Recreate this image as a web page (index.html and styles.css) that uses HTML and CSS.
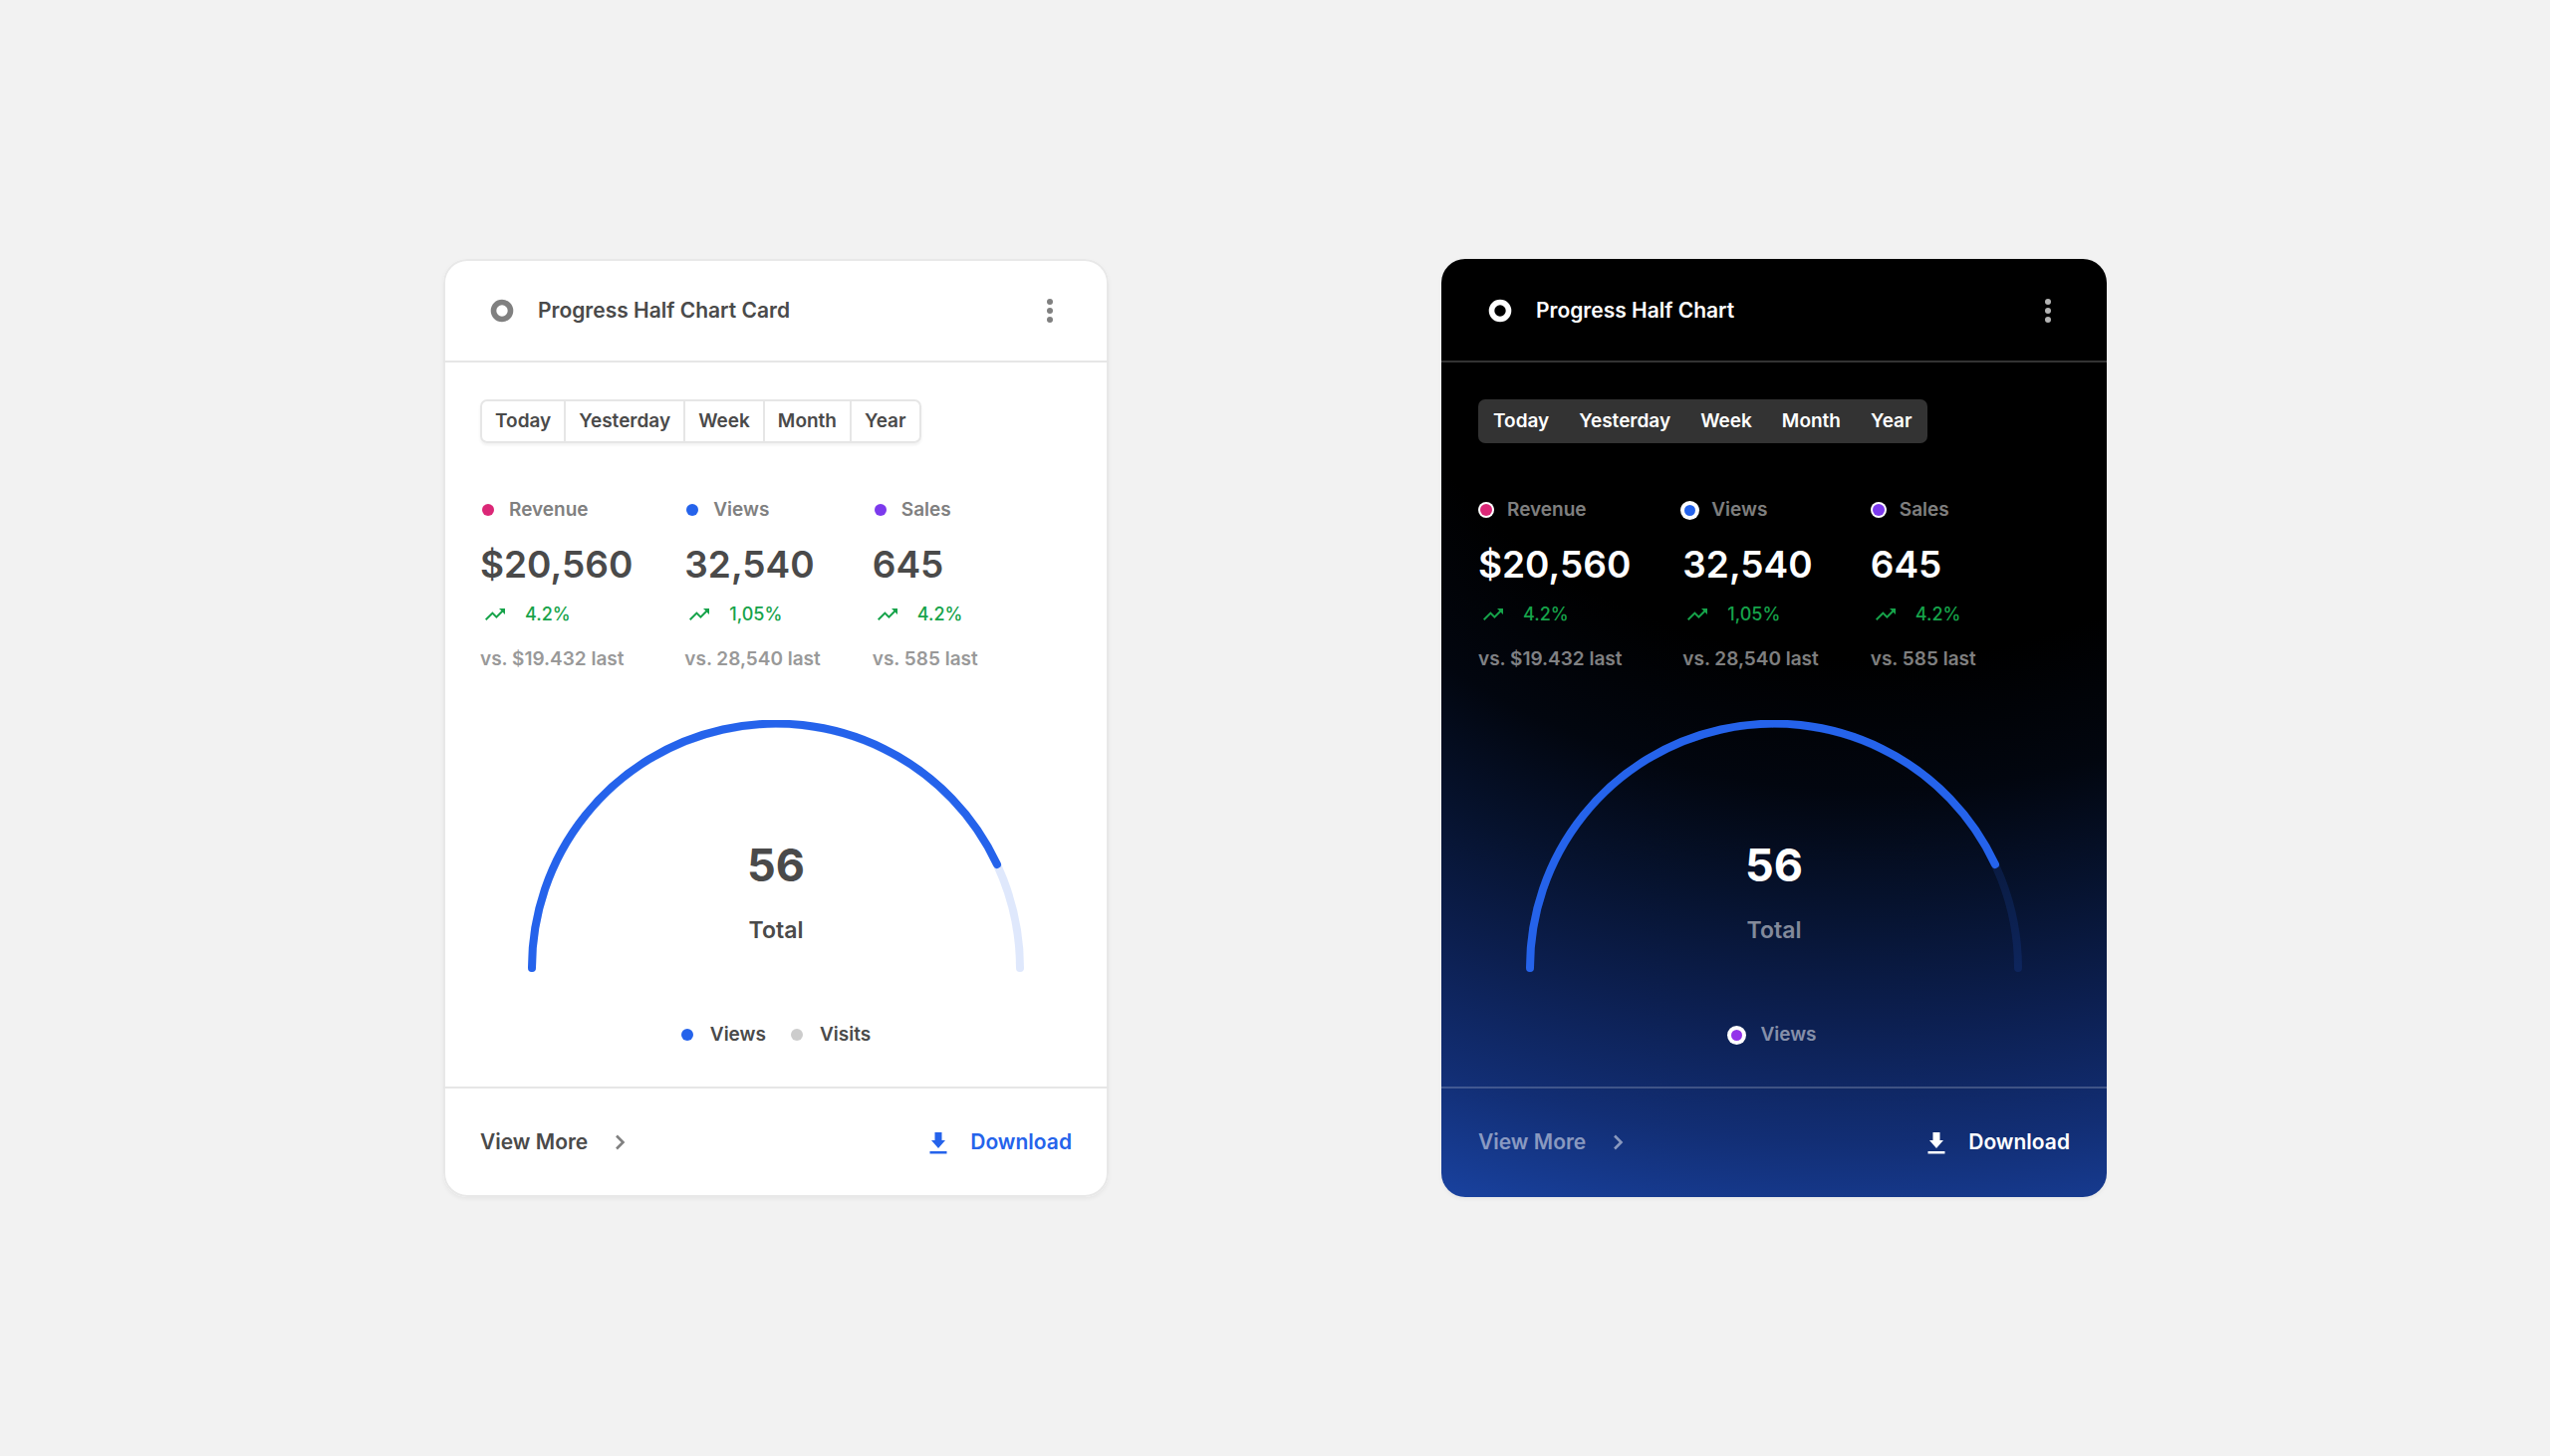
FILE: index.html
```html
<!DOCTYPE html>
<html lang="en">
<head>
    <meta charset="UTF-8">
    <meta name="viewport" content="width=device-width, initial-scale=1.0">
    <title>Progress Half Chart Card</title>
    <link rel="stylesheet" href="styles.css">
</head>
<body>
    <!-- shared icons -->
    <svg class="hidden" aria-hidden="true">
        <symbol id="icon-ring" viewBox="0 0 24 24">
            <circle cx="12" cy="12" r="8.5" fill="none" stroke="currentColor" stroke-width="5.6"/>
        </symbol>
        <symbol id="icon-more" viewBox="0 0 24 24">
            <circle cx="12" cy="3" r="3" fill="currentColor"/>
            <circle cx="12" cy="12" r="3" fill="currentColor"/>
            <circle cx="12" cy="21" r="3" fill="currentColor"/>
        </symbol>
        <symbol id="icon-trend" viewBox="0 0 24 24">
            <path d="M16 6l2.29 2.29-4.88 4.88-4-4L2 16.59 3.41 18l6-6 4 4 6.3-6.29L22 12V6z" fill="currentColor"/>
        </symbol>
        <symbol id="icon-chevron" viewBox="0 0 24 24">
            <path d="M9 5.5l6.5 6.5L9 18.5" fill="none" stroke="currentColor" stroke-width="2.6"/>
        </symbol>
        <symbol id="icon-download" viewBox="0 0 24 24">
            <path d="M8.5 2h7v8H19l-7 8-7-8h3.5zM3.5 21h17v2.5h-17z" fill="currentColor"/>
        </symbol>
    </svg>

    <main class="cards">
        <!-- light card -->
        <section class="card">
            <header class="card-header">
                <svg class="icon ring"><use href="#icon-ring"/></svg>
                <h2>Progress Half Chart Card</h2>
                <button class="more-btn" aria-label="More options"><svg class="icon"><use href="#icon-more"/></svg></button>
            </header>
            <div class="card-body">
                <div class="tabs">
                    <button>Today</button>
                    <button>Yesterday</button>
                    <button>Week</button>
                    <button>Month</button>
                    <button>Year</button>
                </div>
                <div class="stats">
                    <div class="stat">
                        <p class="stat-label"><span class="dot pink"></span>Revenue</p>
                        <p class="stat-value">$20,560</p>
                        <p class="stat-trend"><svg><use href="#icon-trend"/></svg>4.2%</p>
                        <p class="stat-last">vs. $19.432 last</p>
                    </div>
                    <div class="stat">
                        <p class="stat-label"><span class="dot blue"></span>Views</p>
                        <p class="stat-value">32,540</p>
                        <p class="stat-trend"><svg><use href="#icon-trend"/></svg>1,05%</p>
                        <p class="stat-last">vs. 28,540 last</p>
                    </div>
                    <div class="stat">
                        <p class="stat-label"><span class="dot purple"></span>Sales</p>
                        <p class="stat-value">645</p>
                        <p class="stat-trend"><svg><use href="#icon-trend"/></svg>4.2%</p>
                        <p class="stat-last">vs. 585 last</p>
                    </div>
                </div>
                <div class="chart">
                    <svg viewBox="0 0 498 253" aria-hidden="true">
                        <path class="track" d="M4 249A245 245 0 0 1 494 249"/>
                        <path class="progress" d="M4 249A245 245 0 0 1 471 145"/>
                    </svg>
                    <div class="chart-text">
                        <strong>56</strong>
                        <span>Total</span>
                    </div>
                </div>
                <div class="legend">
                    <span class="legend-item"><span class="dot blue"></span>Views</span>
                    <span class="legend-item"><span class="dot gray"></span>Visits</span>
                </div>
            </div>
            <footer class="card-footer">
                <a href="#" class="view-more">View More<svg class="icon"><use href="#icon-chevron"/></svg></a>
                <button class="download-btn"><svg class="icon"><use href="#icon-download"/></svg>Download</button>
            </footer>
        </section>

        <!-- dark card -->
        <section class="card dark">
            <header class="card-header">
                <svg class="icon ring"><use href="#icon-ring"/></svg>
                <h2>Progress Half Chart</h2>
                <button class="more-btn" aria-label="More options"><svg class="icon"><use href="#icon-more"/></svg></button>
            </header>
            <div class="card-body">
                <div class="tabs">
                    <button>Today</button>
                    <button>Yesterday</button>
                    <button>Week</button>
                    <button>Month</button>
                    <button>Year</button>
                </div>
                <div class="stats">
                    <div class="stat">
                        <p class="stat-label"><span class="dot pink"></span>Revenue</p>
                        <p class="stat-value">$20,560</p>
                        <p class="stat-trend"><svg><use href="#icon-trend"/></svg>4.2%</p>
                        <p class="stat-last">vs. $19.432 last</p>
                    </div>
                    <div class="stat">
                        <p class="stat-label"><span class="dot blue active"></span>Views</p>
                        <p class="stat-value">32,540</p>
                        <p class="stat-trend"><svg><use href="#icon-trend"/></svg>1,05%</p>
                        <p class="stat-last">vs. 28,540 last</p>
                    </div>
                    <div class="stat">
                        <p class="stat-label"><span class="dot purple"></span>Sales</p>
                        <p class="stat-value">645</p>
                        <p class="stat-trend"><svg><use href="#icon-trend"/></svg>4.2%</p>
                        <p class="stat-last">vs. 585 last</p>
                    </div>
                </div>
                <div class="chart">
                    <svg viewBox="0 0 498 253" aria-hidden="true">
                        <path class="track" d="M4 249A245 245 0 0 1 494 249"/>
                        <path class="progress" d="M4 249A245 245 0 0 1 471 145"/>
                    </svg>
                    <div class="chart-text">
                        <strong>56</strong>
                        <span>Total</span>
                    </div>
                </div>
                <div class="legend">
                    <span class="legend-item"><span class="dot violet active"></span>Views</span>
                </div>
            </div>
            <footer class="card-footer">
                <a href="#" class="view-more">View More<svg class="icon"><use href="#icon-chevron"/></svg></a>
                <button class="download-btn"><svg class="icon"><use href="#icon-download"/></svg>Download</button>
            </footer>
        </section>
    </main>
</body>
</html>
```
FILE: styles.css
```css
* {
    box-sizing: border-box;
}
body {
    margin: 0;
    background: #f2f2f2;
    font-family: Inter, 'Liberation Sans', sans-serif;
    font-size: 19px;
    font-weight: 600;
    line-height: 24px;
    color: #4a4a4a;
}
h2, p {
    margin: 0;
}
button {
    font: inherit;
    color: inherit;
    background: none;
    border: none;
    padding: 0;
    cursor: pointer;
}
.hidden {
    display: none;
}
.icon {
    width: 24px;
    height: 24px;
    flex: none;
}
.cards {
    min-height: 100vh;
    display: flex;
    flex-wrap: wrap;
    justify-content: center;
    align-content: center;
    gap: 40px 334px;
}
.card {
    width: 100%;
    max-width: 668px;
    background: #fff;
    border-radius: 24px;
    box-shadow: inset 0 0 0 2px #e8e8e8, 0 2px 4px rgba(0, 0, 0, 0.05);
}

/* header */
.card-header {
    display: flex;
    align-items: center;
    height: 104px;
    padding: 2px 47px 0;
    border-bottom: 2px solid #e6e6e6;
}
.card-header h2 {
    flex: 1;
    margin-left: 24px;
    font-size: 21px;
    font-weight: 600;
}
.ring,
.more-btn {
    color: #808080;
}
.more-btn {
    display: flex;
}

/* body */
.card-body {
    padding: 37px 37px 40px;
}
.tabs {
    display: inline-flex;
    vertical-align: top;
    height: 44px;
    border: 2px solid #e6e6e6;
    border-radius: 7px;
    box-shadow: 0 2px 3px rgba(0, 0, 0, 0.06);
}
.tabs button {
    padding: 0 13px;
}
.tabs button + button {
    border-left: 2px solid #e6e6e6;
}
.stats {
    display: flex;
    gap: 52px;
    margin-top: 55px;
}
.stat-label {
    display: flex;
    align-items: center;
    gap: 15px;
    padding-left: 2px;
    color: #808080;
}
.dot {
    width: 12px;
    height: 12px;
    border-radius: 50%;
}
.pink { background: #db2777; }
.blue { background: #2563eb; }
.purple { background: #7c3aed; }
.violet { background: #9333ea; }
.gray { background: #ccc; }
.stat-value {
    margin-top: 20px;
    font-size: 37px;
    line-height: 46px;
}
.stat-trend {
    display: flex;
    align-items: center;
    gap: 18px;
    margin-top: 15px;
    padding-left: 3px;
    font-size: 18px;
    font-weight: 500;
    color: #16a34a;
}
.stat-trend svg {
    width: 24px;
    height: 24px;
}
.stat-last {
    margin-top: 21px;
    color: #999;
}

/* half chart */
.chart {
    position: relative;
    max-width: 498px;
    margin: 49px auto 0;
}
.chart svg {
    display: block;
    width: 100%;
}
.chart path {
    fill: none;
    stroke: #2563eb;
    stroke-width: 8;
    stroke-linecap: round;
}
.chart .track {
    stroke-opacity: 0.15;
}
.chart-text {
    position: absolute;
    inset: auto 0 30px;
    display: flex;
    flex-direction: column;
    align-items: center;
    gap: 26px;
}
.chart-text strong {
    font-size: 45px;
    line-height: 54px;
    font-weight: 700;
}
.chart-text span {
    font-size: 23px;
}
.legend {
    display: flex;
    justify-content: center;
    gap: 25px;
    margin-top: 51px;
}
.legend-item {
    display: flex;
    align-items: center;
    gap: 17px;
}

/* footer */
.card-footer {
    display: flex;
    align-items: center;
    justify-content: space-between;
    height: 111px;
    padding: 0 37px 2px;
    border-top: 2px solid #e6e6e6;
    font-size: 21px;
}
.view-more,
.download-btn {
    display: flex;
    align-items: center;
    gap: 20px;
    color: inherit;
    text-decoration: none;
}
.view-more svg {
    color: #808080;
}
.download-btn {
    color: #2563eb;
}

/* dark theme */
.dark {
    color: #fff;
    background: radial-gradient(1258px 1006px at 65% 0, #000 40%, #02060f 53%, #06122d 64%, #0c1f50 76%, #122e74 88%, #1942a0 100%);
    box-shadow: 0 2px 4px rgba(0, 0, 0, 0.05);
}
.dark .card-header,
.dark .card-footer {
    border-color: rgba(255, 255, 255, 0.2);
}
.dark .ring {
    color: #fff;
}
.dark .more-btn {
    color: #b3b3b3;
}
.dark .tabs {
    gap: 2px;
    background: rgba(255, 255, 255, 0.2);
    border-color: transparent;
}
.dark .tabs button + button {
    border-color: transparent;
}
.dark .dot {
    box-shadow: 0 0 0 2px #fff;
}
.dark .dot.active {
    width: 11px;
    height: 11px;
    margin-right: 1px;
    box-shadow: 0 0 0 4px #fff;
}
.dark .stat-label,
.dark .stat-last,
.dark .chart-text span,
.dark .legend,
.dark .view-more,
.dark .view-more svg {
    color: rgba(255, 255, 255, 0.5);
}
.dark .download-btn {
    color: #fff;
}
```
